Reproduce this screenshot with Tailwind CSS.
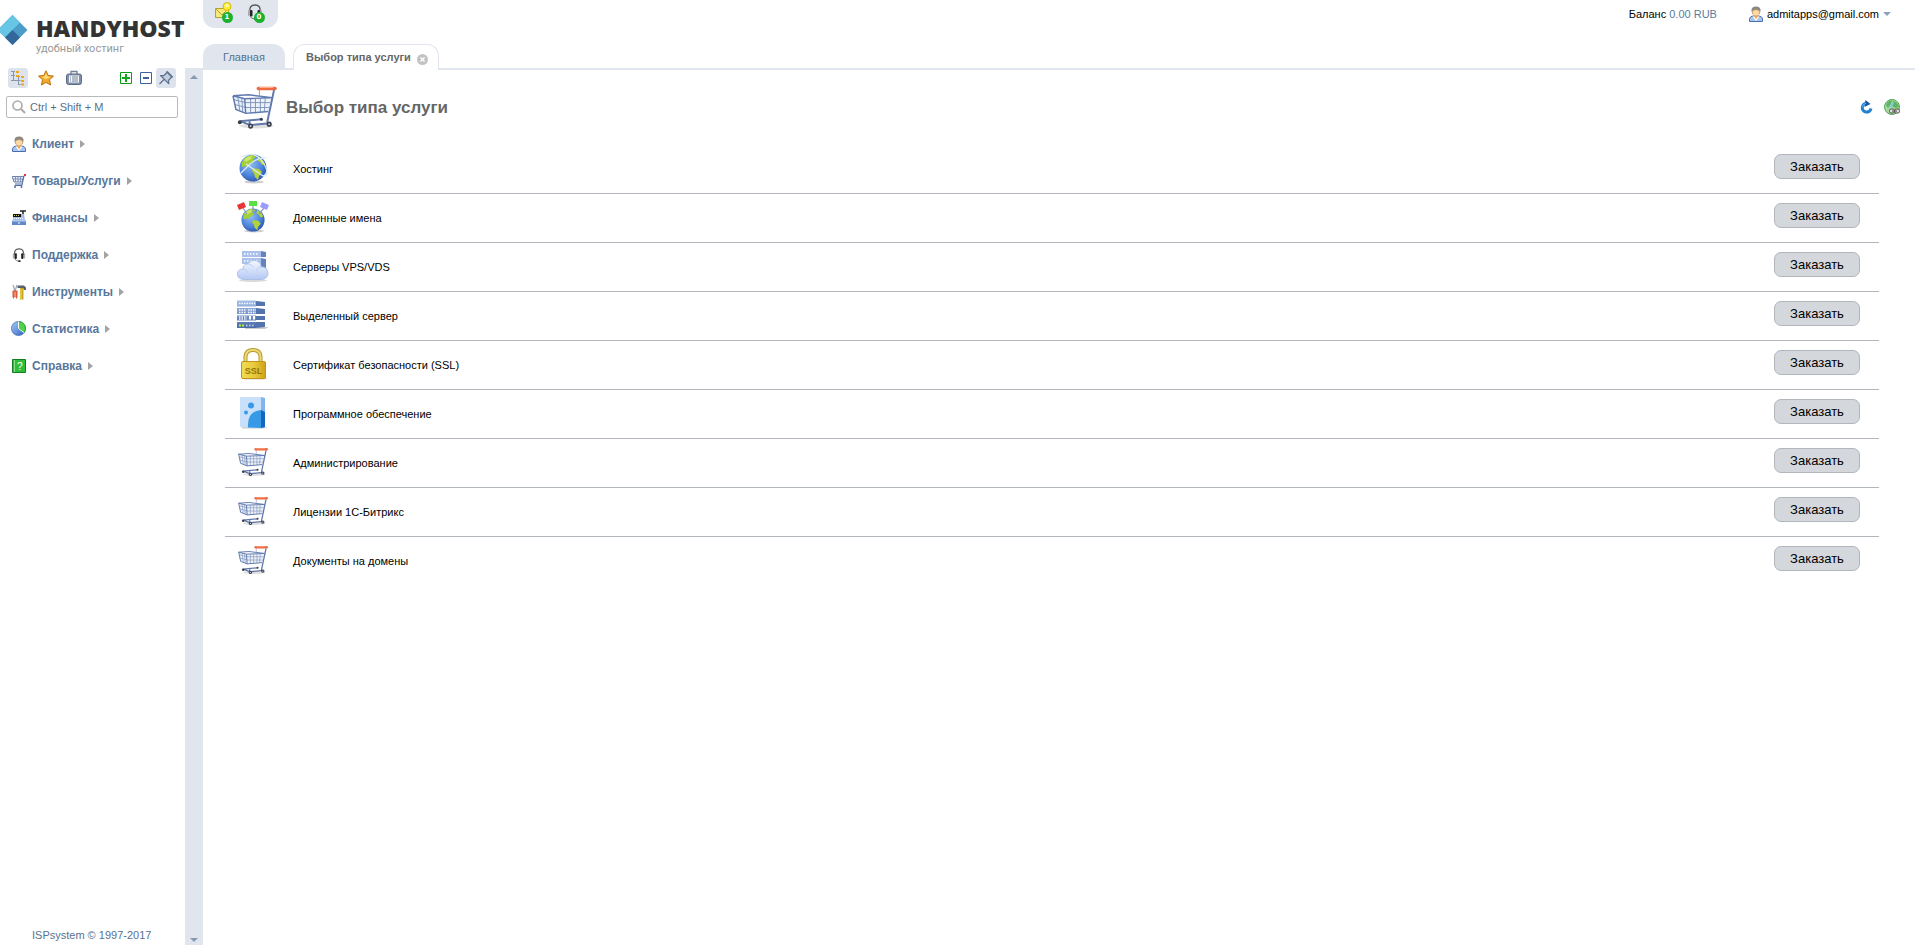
<!DOCTYPE html>
<html lang="ru">
<head>
    <meta charset="UTF-8">
    <meta name="viewport" content="width=device-width, initial-scale=1.0">
    <title>HANDYHOST - Выбор типа услуги</title>
    <script src="https://cdn.jsdelivr.net/npm/@tailwindcss/browser@4"></script>
</head>
<body class="bg-white text-black text-[11px] leading-4 font-['Liberation_Sans',Arial,sans-serif]">
    <!-- Shared icons -->
    <svg width="0" height="0" class="absolute" aria-hidden="true">
        <defs>
            <linearGradient id="g-blue" x1="0" y1="0" x2="1" y2="1"><stop offset="0" stop-color="#a9cdf5"/><stop offset="1" stop-color="#2c5fc0"/></linearGradient>
            <radialGradient id="g-sea" cx=".4" cy=".35" r=".7"><stop offset="0" stop-color="#8fbdf2"/><stop offset=".6" stop-color="#4f86dc"/><stop offset="1" stop-color="#2a55ab"/></radialGradient>
            <linearGradient id="g-gold" x1="0" y1="0" x2="1" y2="0"><stop offset="0" stop-color="#f0dc55"/><stop offset=".5" stop-color="#e8cc3c"/><stop offset="1" stop-color="#cfa01a"/></linearGradient>
            <linearGradient id="g-cloud" x1="0" y1="0" x2="0" y2="1"><stop offset="0" stop-color="#f4f8ff"/><stop offset="1" stop-color="#b3c8f3"/></linearGradient>
            <linearGradient id="g-rack" x1="0" y1="0" x2="0" y2="1"><stop offset="0" stop-color="#a5bfe9"/><stop offset="1" stop-color="#4c6ca8"/></linearGradient>
        </defs>
        <symbol id="cart" viewBox="0 0 46 46">
            <ellipse cx="25" cy="42" rx="17" ry="2.500" fill="#000" opacity=".12"/>
            <path d="M1 11l12 3h27l-3 13-23 2-10-4z" fill="#edf1f9"/>
            <path d="M2 15l12 3h25M3 20l11 3h24M6 12l2 14M10 13l1 15M19 14v15M24 14v14M29 14v14M34 14l-1 13" fill="none" stroke="#8296bd" stroke-width="1"/>
            <path d="M1 11l12 3 28-1M1 11l3 14 10 4 23-2M13 14l1 15M1 11l16-1 24 3" fill="none" stroke="#5f7bb0" stroke-width="1.500"/>
            <path d="M43 5l-7 33M8 37l22-2M8 37l11 4 19-2M18 36v5" fill="none" stroke="#6079ab" stroke-width="2"/>
            <path d="M28 5v7" stroke="#8ea1c4"/>
            <path d="M27 3.500h17" stroke="#ec6a40" stroke-width="3.600" stroke-linecap="round"/>
            <path d="M28 2.600h14" stroke="#ffb297" stroke-width="1"/>
            <g fill="#3b3f4a"><circle cx="8" cy="38" r="2"/><circle cx="19" cy="42" r="2.600"/><circle cx="38" cy="40" r="2.600"/><circle cx="30" cy="35" r="1.600"/></g>
            <g fill="#cfd4de"><circle cx="19" cy="42" r="1"/><circle cx="38" cy="40" r="1"/></g>
        </symbol>
        <symbol id="user" viewBox="0 0 14 16">
            <path d="M.5 15.500v-3Q1 10.500 4 10h6q3 .5 3.500 2.500v3z" fill="#a9c4ee" stroke="#4a6fae"/>
            <path d="M3.500 10.500L7 15l3.500-4.500z" fill="#fff"/>
            <path d="M2.500 5Q2 .5 7 .5T11.500 5l-1 3h-7z" fill="#8c8780"/>
            <path d="M3.500 5q3.500-2.500 7 0 .5 4-3.500 5.500Q3 9 3.500 5z" fill="#fdd9a5" stroke="#d19b5c" stroke-width=".5"/>
            <path d="M5 9.500h4L7 13.500z" fill="#f4a03c"/>
        </symbol>
        <symbol id="headset" viewBox="0 0 16 16">
            <path d="M3 8Q2 1 8 1t5 7" fill="none" stroke="#555" stroke-width="1.300"/>
            <rect x="1" y="6" width="2" height="6" rx="1" fill="#aaa"/><rect x="13" y="6" width="2" height="6" rx="1" fill="#aaa"/>
            <rect x="3" y="6" width="2.500" height="6.500" rx="1" fill="#222"/><rect x="10.500" y="6" width="2.500" height="6.500" rx="1" fill="#222"/>
            <path d="M3 12q1 3 5 3" fill="none" stroke="#777"/><rect x="7" y="14" width="3" height="2" rx="1" fill="#333"/>
        </symbol>
        <symbol id="globe" viewBox="0 0 28 28">
            <circle cx="14" cy="14" r="13.500" fill="url(#g-sea)"/>
            <path d="M4 6Q8 1 14 1l3 2-3 2 1 3-4 2-1 3-3-1-4 1Q2 9 4 6z" fill="#a4cf35"/>
            <path d="M14 14l6 1 3 3-3 4-1 4-3-3-1-4-2-2zM19 2q5 3 7 8l-3 1-2-3-3-2z" fill="#b3d338"/>
            <path d="M5 6q3-4 8-4l-1 3-5 3z" fill="#dcef86" opacity=".7"/>
        </symbol>
        <symbol id="arrow" viewBox="0 0 5 8"><path d="M0 0l5 4-5 4z" fill="#a3a3a3"/></symbol>
    </svg>

    <div class="flex min-h-screen">
        <!-- Sidebar -->
        <aside class="flex w-[203px] shrink-0 flex-col">
            <a href="#" class="flex h-[68px] gap-2 pt-[14px]">
                <svg class="h-8 w-7 shrink-0" viewBox="0 0 28 32">
                    <path d="M12.500 1L27.500 16l-15 15-15-15z" fill="#4b9cc9"/>
                    <path d="M12.500 1L20 8.500 5 23.500-2.500 16z" fill="#67c5e6"/>
                    <path d="M12.500 16L20 23.500 12.500 31 5 23.500z" fill="#336699"/>
                </svg>
                <span class="flex flex-col">
                    <span class="font-['Open_Sans',sans-serif] text-[23px] leading-7 font-extrabold text-[#333]">HANDYHOST</span>
                    <span class="pt-[1px] font-['Roboto',sans-serif] text-[11px] leading-3 text-[#999]">удобный хостинг</span>
                </span>
            </a>
            <div class="flex flex-1">
                <div class="flex w-[185px] flex-col">
                    <div class="flex items-center pr-[9px] pl-2">
                        <button class="flex size-5 items-center justify-center rounded-[3px] bg-[#dde3ec]" aria-label="Дерево">
                            <svg class="size-4" viewBox="0 0 16 16"><path d="M1 1.500h4M3.500 2v9M1 5.500h4M1 10.500h8M8.500 6v9M6 6.500h4M8.500 10.500h2M8.500 14.500h2" fill="none" stroke="#8a97a8"/><g fill="#f0a818"><path d="M6 1h3v2H6zM6 5h3v2H6zM11 6h3v2h-3zM11 10h3v2h-3zM11 13.500h3v2h-3z"/></g></svg>
                        </button>
                        <button class="ml-[10px]" aria-label="Избранное">
                            <svg class="size-4" viewBox="0 0 16 16"><path d="M8 .8l2.200 4.700 5.300.6-4 3.600 1.100 5.300L8 12.400 3.400 15l1.100-5.300-4-3.600 5.300-.6z" fill="#f3a92c" stroke="#b8700c"/><path d="M8 3l1.500 3.500 3.500.5-5 2-5-2 3.500-.5z" fill="#ffdc75"/></svg>
                        </button>
                        <button class="ml-3" aria-label="Портфель">
                            <svg class="size-4" viewBox="0 0 16 16"><path d="M5 4V1.500h6V4" fill="none" stroke="#71829a" stroke-width="1.300"/><rect x=".5" y="4" width="15" height="10.500" rx="2" fill="#8191a9" stroke="#5c6d87"/><path d="M3 5.500h10v7H3z" fill="#f6f8fb"/><path d="M4 7h1M6 7h6M4 9h1M6 9h6M4 11h1M6 11h6" stroke="#71829a"/></svg>
                        </button>
                        <button class="ml-auto" aria-label="Развернуть">
                            <svg class="size-3" viewBox="0 0 12 12"><path d="M.5.5h11v11H.5z" fill="#fff" stroke="#0b9c14"/><path d="M6 2v8M2 6h8" stroke="#13a81c" stroke-width="2"/></svg>
                        </button>
                        <button class="ml-2" aria-label="Свернуть">
                            <svg class="size-3" viewBox="0 0 12 12"><path d="M.5.5h11v11H.5z" fill="#fff" stroke="#3f619a"/><path d="M3 6h6" stroke="#3f619a" stroke-width="2"/></svg>
                        </button>
                        <button class="ml-1 flex size-5 items-center justify-center rounded-[3px] bg-[#dde3ec]" aria-label="Закрепить">
                            <svg class="size-4" viewBox="0 0 16 16"><path d="M9.500 2L14 6.500l-3.500 4 .3 3.200L2.500 5.500l3.200.2z" fill="#c3cedc" stroke="#5d738f" stroke-width="1.200" stroke-linejoin="round"/><path d="M8.500 1.500l6 6" stroke="#5d738f" stroke-width="1.600"/><path d="M6 9.500L1.500 14" stroke="#5d738f" stroke-width="1.300"/></svg>
                        </button>
                    </div>
                    <label class="mr-[7px] ml-[6px] mt-2 flex h-[22px] items-center gap-1 rounded-[2px] border border-[#b9b9b9] px-[5px]">
                        <svg class="size-[14px] shrink-0" viewBox="0 0 14 14"><circle cx="5.500" cy="5.500" r="4.500" fill="none" stroke="#aaa" stroke-width="1.600"/><path d="M9 9l4 4" stroke="#aaa" stroke-width="2"/></svg>
                        <input type="text" aria-label="Поиск" placeholder="Ctrl + Shift + M" class="w-full min-w-0 text-[11px] outline-none placeholder:text-[#5b7086]">
                    </label>
                    <nav class="mt-[7px] text-xs font-bold text-[#58779c]">
                        <a href="#" class="flex h-[37px] items-center pl-3"><svg class="h-4 w-[14px]"><use href="#user"/></svg><span class="mx-[6px]">Клиент</span><svg class="h-2 w-[5px]"><use href="#arrow"/></svg></a>
                        <a href="#" class="flex h-[37px] items-center pl-3">
                            <svg class="h-4 w-[14px]" viewBox="0 0 14 16"><path d="M0 3.500h12L10 9H2z" fill="#e4eaf6" stroke="#7084ad"/><path d="M1 6h10M3.500 4v5M6 4v5M8.500 4v5" stroke="#7084ad" stroke-width=".8"/><path d="M12 2.500l-2 10H2.500M3 11h7" fill="none" stroke="#536da0"/><path d="M12 1h2v2h-2z" fill="#e33a36"/><circle cx="3" cy="14" r="1" fill="#536da0"/><circle cx="9.500" cy="14" r="1" fill="#536da0"/></svg>
                            <span class="mx-[6px]">Товары/Услуги</span><svg class="h-2 w-[5px]"><use href="#arrow"/></svg>
                        </a>
                        <a href="#" class="flex h-[37px] items-center pl-3">
                            <svg class="h-4 w-[14px]" viewBox="0 0 14 16"><path d="M8 1h6M11 1v4" stroke="#222" stroke-width="1.500"/><path d="M1 10V4h11l1 6z" fill="#a3bce6"/><path d="M1 4h8v3H1z" fill="#111"/><path d="M2 5.500h6" stroke="#ded44c" stroke-dasharray="1 1"/><path d="M2 8.500h10" stroke="#fff" stroke-dasharray="1 1"/><path d="M0 10.500h14V15H0z" fill="#6188c9"/><path d="M0 11h14" stroke="#b6cef3"/><path d="M6 13h2" stroke="#fff"/></svg>
                            <span class="mx-[6px]">Финансы</span><svg class="h-2 w-[5px]"><use href="#arrow"/></svg>
                        </a>
                        <a href="#" class="flex h-[37px] items-center pl-3"><svg class="h-4 w-[14px]"><use href="#headset"/></svg><span class="mx-[6px]">Поддержка</span><svg class="h-2 w-[5px]"><use href="#arrow"/></svg></a>
                        <a href="#" class="flex h-[37px] items-center pl-3">
                            <svg class="h-4 w-[14px]" viewBox="0 0 14 16"><path d="M1 1l2 6M5 1L3 7" stroke="#9aa5b8" stroke-width="1.200"/><path d="M.5 6.500h5V13l-1 2-1.500-3-1.500 3-1-2z" fill="#dc5a38"/><path d="M3 8v4" stroke="#ffc3ae"/><path d="M5.500 1.500H12l2 2V6h-2l-1-2H5.500z" fill="#59636f"/><path d="M8 4h3.500v11.500H8z" fill="#c7a81c"/><path d="M9 5v10" stroke="#f3e168"/></svg>
                            <span class="mx-[6px]">Инструменты</span><svg class="h-2 w-[5px]"><use href="#arrow"/></svg>
                        </a>
                        <a href="#" class="flex h-[37px] items-center pl-[11px]">
                            <svg class="size-[15px]" viewBox="0 0 16 16"><circle cx="8" cy="8" r="7.500" fill="url(#g-blue)" stroke="#3c6cb5" stroke-width=".8"/><path d="M8 8V.5A7.500 7.500 0 0 1 14 12.500z" fill="#4fd34c" stroke="#24a02c" stroke-width=".8"/><path d="M8 .5V8l6 4.500" fill="none" stroke="#fff"/></svg>
                            <span class="mx-[6px]">Статистика</span><svg class="h-2 w-[5px]"><use href="#arrow"/></svg>
                        </a>
                        <a href="#" class="flex h-[37px] items-center pl-3">
                            <svg class="h-4 w-[14px]" viewBox="0 0 14 16"><path d="M.5 1.500h13v13H.5z" fill="#2fbd3b" stroke="#137c1e"/><path d="M2.500 2v12" stroke="#8be08f"/><text x="5" y="12" font-size="10" font-weight="normal" fill="#fff">?</text></svg>
                            <span class="mx-[6px]">Справка</span><svg class="h-2 w-[5px]"><use href="#arrow"/></svg>
                        </a>
                    </nav>
                    <p class="mt-auto pb-[2px] pl-8 text-[#56728f]">ISPsystem © 1997-2017</p>
                </div>
                <div class="flex flex-1 flex-col items-center justify-between bg-[#e0e5ee] pt-[7px] pb-[3px]">
                    <svg class="h-1 w-2" viewBox="0 0 8 4"><path d="M0 4l4-4 4 4z" fill="#8399b5"/></svg>
                    <svg class="h-1 w-2" viewBox="0 0 8 4"><path d="M0 0l4 4 4-4z" fill="#8399b5"/></svg>
                </div>
            </div>
        </aside>

        <main class="min-w-0 flex-1">
            <!-- Top bar and tabs -->
            <header class="flex h-[70px] flex-col justify-between border-b-2 border-[#e0e5ee]">
                <div class="flex h-7 items-center">
                    <div class="flex h-7 w-[75px] justify-center gap-3 rounded-b-[12px] bg-[#e0e5ee] pt-[2px]">
                        <button class="relative size-5" aria-label="Сообщения">
                            <svg class="size-5" viewBox="0 0 20 20"><path d="M.5 6.500h13v9H.5z" fill="#f3e878" stroke="#b5a42c"/><path d="M1 7l6 6 6-6" fill="none" stroke="#b5a42c"/><circle cx="12" cy="4.500" r="4" fill="#ffec2c" stroke="#d8b811"/><circle cx="12" cy="3.500" r="1.800" fill="#fffbc9"/></svg>
                            <span class="absolute top-[10px] left-[7px] flex size-[11px] items-center justify-center rounded-full bg-[#1db02d] font-['DejaVu_Sans',sans-serif] text-[7px] leading-none font-bold text-white">1</span>
                        </button>
                        <button class="relative size-5" aria-label="Обращения">
                            <svg class="size-4"><use href="#headset"/></svg>
                            <span class="absolute top-[10px] left-[7px] flex size-[11px] items-center justify-center rounded-full bg-[#1db02d] font-['DejaVu_Sans',sans-serif] text-[7px] leading-none font-bold text-white">0</span>
                        </button>
                    </div>
                    <div class="ml-auto flex items-center pr-6">
                        <span>Баланс <a href="#" class="text-[#5b7b9e]">0.00 RUB</a></span>
                        <svg class="mr-1 ml-8 h-4 w-[14px]"><use href="#user"/></svg>
                        <button class="flex items-center gap-1">admitapps@gmail.com <svg class="h-1 w-2" viewBox="0 0 8 4"><path d="M0 0l4 4 4-4z" fill="#8ba3c2"/></svg></button>
                    </div>
                </div>
                <nav class="-mb-[2px] flex gap-2">
                    <a href="#" class="flex h-[26px] w-[82px] items-center justify-center rounded-t-[12px] bg-[#e0e5ee] text-[#56728f]">Главная</a>
                    <div class="flex h-[26px] w-[146px] items-center rounded-t-[12px] border border-b-0 border-[#e0e5ee] bg-white pl-3 font-bold text-[#666]">
                        <a href="#" class="pb-[1px]">Выбор типа услуги</a>
                        <button class="mt-[3px] mr-[10px] ml-auto" aria-label="Закрыть">
                            <svg class="size-[11px]" viewBox="0 0 11 11"><circle cx="5.500" cy="5.500" r="5.500" fill="#c3c3c3"/><path d="M3.500 3.500l4 4M7.500 3.500l-4 4" stroke="#fff" stroke-width="1.400"/></svg>
                        </button>
                    </div>
                </nav>
            </header>

            <!-- Page title -->
            <div class="flex h-[75px] items-center pr-[15px] pl-[29px]">
                <svg class="size-[45px]"><use href="#cart"/></svg>
                <h1 class="ml-[9px] text-[17px] font-bold text-[#666]">Выбор типа услуги</h1>
                <button class="ml-auto pb-[2px]" aria-label="Обновить">
                    <svg class="size-[14px]" viewBox="0 0 14 14"><path d="M7.500 3.300A4.400 4.400 0 1 0 12 8.500" fill="none" stroke="#2180cf" stroke-width="3"/><path d="M6.500 0l5 4-6 3z" fill="#1659a6"/><path d="M3 7Q4 4 7 3.300" fill="none" stroke="#6db6ec"/></svg>
                </button>
                <button class="ml-[11px] pb-[2px]" aria-label="Ссылка">
                    <svg class="size-4" viewBox="0 0 16 16"><circle cx="8" cy="8" r="7.500" fill="#a3dc98" stroke="#57a55a"/><path d="M2 6q1-4 6-5L7 5 4 9zM9 2q5 1 6 6l-4 1-3-2z" fill="#5cb569"/><path d="M5 8l4-5 1 1-3 5z" fill="#8fc4e6"/><rect x="5.500" y="10" width="5" height="4" rx="1.500" fill="#ddd" stroke="#555"/><rect x="10.500" y="10" width="5" height="4" rx="1.500" fill="#ddd" stroke="#555"/><path d="M8 12h5" stroke="#444"/></svg>
                </button>
            </div>

            <!-- Services -->
            <div class="pr-9 pl-[22px]">
                <table class="w-full border-separate border-spacing-0 [&_td]:h-[49px] [&_td]:border-b [&_td]:border-[#b0b6bb] [&_td]:p-0 [&_tr:last-child_td]:border-transparent">
                    <tbody>
                        <tr>
                            <td class="w-[68px] align-top"><svg class="mt-[7px] ml-3 size-8" viewBox="0 0 32 32"><ellipse cx="17" cy="30" rx="10" ry="1.500" opacity=".2"/><use href="#globe" x="2" y="2" width="28" height="28"/><path d="M4 5Q17-2 25 9t3 16M30 6Q20 5 12 13L4 21M9 12l17 12 5-3" fill="none" stroke="#dcebfd" stroke-width="1.200"/></svg></td>
                            <td>Хостинг</td>
                            <td class="w-[105px] align-top"><button class="mt-[9px] h-[25px] w-[86px] rounded-[7px] border border-[#b0b6bc] bg-[#d4d8dd] text-[13px]">Заказать</button></td>
                        </tr>
                        <tr>
                            <td class="align-top"><svg class="mt-[7px] ml-3 size-8" viewBox="0 0 32 32"><ellipse cx="17" cy="30" rx="10" ry="1.500" opacity=".2"/><use href="#globe" x="4" y="7" width="24" height="24"/><path d="M6 7l4 6M16 5v7M27 7l-5 6" stroke="#8a9bb8" stroke-width="1.200"/><path d="M0 4l7-3 2 5-7 3z" fill="#e93434"/><path d="M12 0h8v5h-8z" fill="#58e244"/><path d="M25 1l7 3-2 5-7-3z" fill="#9b9bfb"/></svg></td>
                            <td>Доменные имена</td>
                            <td class="align-top"><button class="mt-[9px] h-[25px] w-[86px] rounded-[7px] border border-[#b0b6bc] bg-[#d4d8dd] text-[13px]">Заказать</button></td>
                        </tr>
                        <tr>
                            <td class="align-top"><svg class="mt-[7px] ml-3 size-8" viewBox="0 0 32 32"><path d="M24 1l5 1v5h-5zM24 8l5 1v10h-5z" fill="#6484bc"/><path d="M5 1h19v6H5zM5 8h19v6H5z" fill="#a9c1ec"/><path d="M7 4h15M7 11h15" stroke="#fff" stroke-width="1.500" stroke-dasharray="1.500 1.500"/><ellipse cx="16" cy="30.500" rx="14" ry="1.500" opacity=".15"/><path d="M6 29.500q-6-1-5.500-6Q1 19 6 19q0-5 5-5 3-5 9-3 5 2 4 6 6-1 7 6 0 5-5.500 6.500z" fill="url(#g-cloud)" stroke="#a5b9e4" stroke-width=".8"/><path d="M6 19q4 0 5 4M25 17q-5 0-5 4M11 14q4 0 5 3" fill="none" stroke="#c1d0ef"/></svg></td>
                            <td>Серверы VPS/VDS</td>
                            <td class="align-top"><button class="mt-[9px] h-[25px] w-[86px] rounded-[7px] border border-[#b0b6bc] bg-[#d4d8dd] text-[13px]">Заказать</button></td>
                        </tr>
                        <tr>
                            <td class="align-top"><svg class="mt-[7px] ml-3 size-8" viewBox="0 0 32 32"><path d="M8 28h24l-4 2H8z" opacity=".2"/><path d="M19 2l9 1v4h-9zM19 9l9 1v5h-9zM19 17h9v4h-9zM19 23h9v5l-9 1z" fill="#5474ad"/><path d="M0 1.500h19v6H0zM0 9h19v6H0zM0 16.500h19v5H0zM0 23h19v6H0z" fill="url(#g-rack)"/><path d="M2 4.500h16M2 11h7M11 11h8M2 13.500h7M11 13.500h8M2 18h8M2 20h8" stroke="#f4f8ff" stroke-width="1.300" stroke-dasharray="1.500 1"/><path d="M12 17h2v3.500h-2zM16 17h2v3.500h-2z" fill="#fff"/><path d="M2 26.500h5" stroke="#b8ef3c" stroke-width="2" stroke-dasharray="2 1"/><path d="M9 26.500h9" stroke="#c9d8f3" stroke-width="1.500" stroke-dasharray="1.500 1.500"/></svg></td>
                            <td>Выделенный сервер</td>
                            <td class="align-top"><button class="mt-[9px] h-[25px] w-[86px] rounded-[7px] border border-[#b0b6bc] bg-[#d4d8dd] text-[13px]">Заказать</button></td>
                        </tr>
                        <tr>
                            <td class="align-top"><svg class="mt-[7px] ml-3 size-8" viewBox="0 0 32 32"><path d="M7 30h24l-4 1.500H7z" opacity=".2"/><path d="M8.500 14V8.500Q9 2 16 2t7.500 6.500V14" fill="none" stroke="#b9982b" stroke-width="4"/><path d="M8.500 14V8.500Q9 2 16 2t7.500 6.500V14" fill="none" stroke="#eadb79" stroke-width="2"/><rect x="4.500" y="13.500" width="24" height="17" rx="1.500" fill="url(#g-gold)" stroke="#c29417"/><text x="16.500" y="26" text-anchor="middle" font-size="9" font-weight="bold" fill="#9c7408">SSL</text></svg></td>
                            <td>Сертификат безопасности (SSL)</td>
                            <td class="align-top"><button class="mt-[9px] h-[25px] w-[86px] rounded-[7px] border border-[#b0b6bc] bg-[#d4d8dd] text-[13px]">Заказать</button></td>
                        </tr>
                        <tr>
                            <td class="align-top"><svg class="mt-[7px] ml-3 size-8" viewBox="0 0 32 32"><path d="M5 30h26l-4 1.500H5z" opacity=".2"/><path d="M3 0h21v31L3 30z" fill="#c9e0fa"/><path d="M24 0l4 1v29l-4 1z" fill="#82b5ec"/><path d="M24 13l4 2v15l-4 1z" fill="#1267be"/><path d="M11 30.500Q10 14 24 13v18z" fill="#379ae6"/><circle cx="14" cy="8.500" r="3" fill="#379ae6"/><circle cx="9" cy="15.500" r="2" fill="#379ae6"/></svg></td>
                            <td>Программное обеспечение</td>
                            <td class="align-top"><button class="mt-[9px] h-[25px] w-[86px] rounded-[7px] border border-[#b0b6bc] bg-[#d4d8dd] text-[13px]">Заказать</button></td>
                        </tr>
                        <tr>
                            <td class="align-top"><svg class="mt-2 ml-[13px] size-[30px]"><use href="#cart"/></svg></td>
                            <td>Администрирование</td>
                            <td class="align-top"><button class="mt-[9px] h-[25px] w-[86px] rounded-[7px] border border-[#b0b6bc] bg-[#d4d8dd] text-[13px]">Заказать</button></td>
                        </tr>
                        <tr>
                            <td class="align-top"><svg class="mt-2 ml-[13px] size-[30px]"><use href="#cart"/></svg></td>
                            <td>Лицензии 1С-Битрикс</td>
                            <td class="align-top"><button class="mt-[9px] h-[25px] w-[86px] rounded-[7px] border border-[#b0b6bc] bg-[#d4d8dd] text-[13px]">Заказать</button></td>
                        </tr>
                        <tr>
                            <td class="align-top"><svg class="mt-2 ml-[13px] size-[30px]"><use href="#cart"/></svg></td>
                            <td>Документы на домены</td>
                            <td class="align-top"><button class="mt-[9px] h-[25px] w-[86px] rounded-[7px] border border-[#b0b6bc] bg-[#d4d8dd] text-[13px]">Заказать</button></td>
                        </tr>
                    </tbody>
                </table>
            </div>
        </main>
    </div>
</body>
</html>
